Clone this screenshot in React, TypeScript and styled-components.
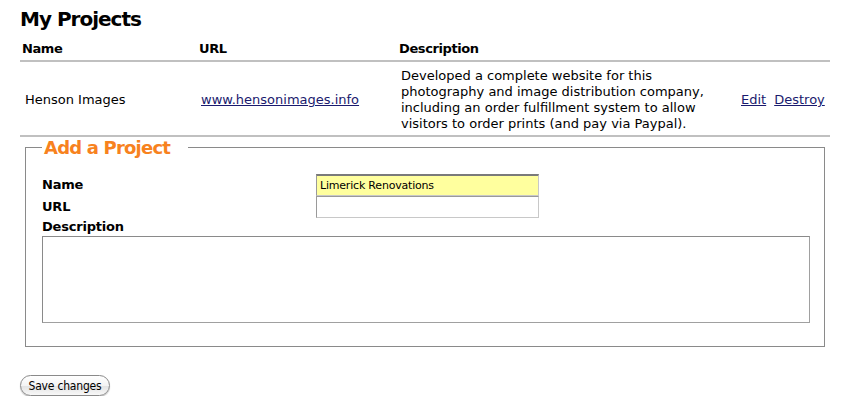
import React from "react";
import styled, { createGlobalStyle } from "styled-components";

const Global = createGlobalStyle`
  html, body { margin: 0; padding: 0; background: #fff; }
  body {
    font-family: "DejaVu Sans", Verdana, sans-serif;
    font-size: 13px;
    color: #000;
  }
`;

const Page = styled.div`
  padding: 6px 17px 0 20px;
  width: 810px;
`;

const Title = styled.h1`
  margin: 0;
  font-size: 20px;
  font-weight: bold;
  line-height: 26px;
  letter-spacing: -1px;
`;

const Table = styled.table`
  width: 810px;
  border-collapse: collapse;
  margin-top: 9px;
`;

const Th = styled.th<{ $w?: number }>`
  text-align: left;
  font-size: 13px;
  font-weight: bold;
  padding: 0 2px 4px;
  border-bottom: 2px solid #c0c0c0;
  width: ${(p) => (p.$w ? `${p.$w}px` : "auto")};
  letter-spacing: -0.4px;
`;

const Td = styled.td<{ $pl?: number }>`
  vertical-align: middle;
  padding: 6px 2px 3px ${(p) => p.$pl ?? 2}px;
  line-height: 16px;
  border-bottom: 2px solid #c0c0c0;
`;

const Link = styled.a`
  color: #1a1a6e;
  text-decoration: underline;
`;

const Actions = styled.div`
  display: flex;
  gap: 8px;
  padding-left: 2px;
`;

const Fieldset = styled.fieldset`
  margin: 0 0 0 5px;
  width: 798px;
  box-sizing: border-box;
  border: 1px solid #8a8a8a;
  padding: 16px 14px 23px 16px;
`;

const Legend = styled.legend`
  color: #f7821e;
  font-size: 18px;
  font-weight: bold;
  padding: 0 18px 0 2px;
  margin-left: 0;
  letter-spacing: -0.8px;
`;

const Row = styled.div`
  display: grid;
  grid-template-columns: 274px 223px;
  align-items: center;
`;

const Label = styled.label`
  font-weight: bold;
  font-size: 13px;
  line-height: 22px;
  letter-spacing: -0.2px;
`;

const TextInput = styled.input<{ $hl?: boolean }>`
  box-sizing: border-box;
  width: 223px;
  height: 22px;
  margin: 0;
  padding: 2px 3px;
  font-family: "DejaVu Sans", Verdana, sans-serif;
  font-size: 11px;
  letter-spacing: -0.2px;
  background: ${(p) => (p.$hl ? "#ffff9e" : "#fff")};
  border: 1px solid #c8c8c8;
  border-top: ${(p) => (p.$hl ? "2px solid #7a7a7a" : "1px solid #9a9a9a")};
  border-left-color: #9a9a9a;
  outline: none;
`;

const DescLabel = styled(Label)`
  display: block;
  line-height: 18px;
`;

const TextArea = styled.textarea`
  display: block;
  box-sizing: border-box;
  width: 768px;
  height: 87px;
  margin: 0;
  resize: none;
  border: 1px solid #8a8a8a;
  border-right-color: #a0a0a0;
  border-bottom-color: #a0a0a0;
  outline: none;
`;

const ButtonBar = styled.div`
  margin-top: 28px;
`;

const Button = styled.button`
  height: 21px;
  width: 90px;
  padding: 0;
  border-radius: 11px;
  border: 1px solid #8a8a8a;
  background: linear-gradient(#ffffff 0%, #f4f4f4 50%, #e2e2e2 51%, #f8f8f8 100%);
  box-shadow: 0 1px 1px rgba(0, 0, 0, 0.25);
  font-family: "DejaVu Sans Condensed", "DejaVu Sans", sans-serif;
  font-stretch: condensed;
  font-size: 12px;
  letter-spacing: -0.2px;
  color: #000;
`;

export default function App() {
  return (
    <>
      <Global />
      <Page>
        <Title>My Projects</Title>
        <Table>
          <thead>
            <tr>
              <Th $w={173}>Name</Th>
              <Th $w={196}>URL</Th>
              <Th $w={336}>Description</Th>
              <Th></Th>
            </tr>
          </thead>
          <tbody>
            <tr>
              <Td $pl={5}>Henson Images</Td>
              <Td $pl={4}>
                <Link href="#">www.hensonimages.info</Link>
              </Td>
              <Td $pl={4}>
                Developed a complete website for this photography and image distribution company,
                including an order fulfillment system to allow visitors to order prints (and pay via
                Paypal).
              </Td>
              <Td>
                <Actions>
                  <Link href="#">Edit</Link>
                  <Link href="#">Destroy</Link>
                </Actions>
              </Td>
            </tr>
          </tbody>
        </Table>
        <Fieldset>
          <Legend>Add a Project</Legend>
          <Row>
            <Label>Name</Label>
            <TextInput $hl defaultValue="Limerick Renovations" />
          </Row>
          <Row>
            <Label>URL</Label>
            <TextInput />
          </Row>
          <DescLabel>Description</DescLabel>
          <TextArea />
        </Fieldset>
        <ButtonBar>
          <Button>Save changes</Button>
        </ButtonBar>
      </Page>
    </>
  );
}
